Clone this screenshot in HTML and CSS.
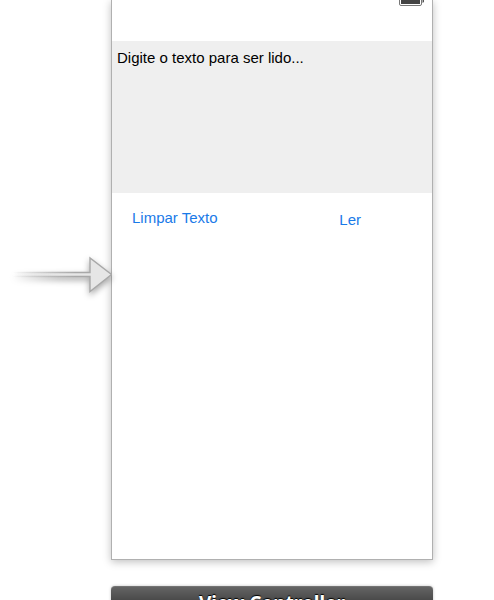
FILE: index.html
```
<!DOCTYPE html>
<html lang="pt-BR">
<head>
    <meta charset="UTF-8">
    <meta name="viewport" content="width=device-width, initial-scale=1.0">
    <title>View Controller</title>
    <link rel="stylesheet" href="styles.css">
</head>
<body>
    <main class="storyboard">
        <div class="entry">
            <svg class="arrow" width="112" height="48" viewBox="0 0 112 48" aria-hidden="true">
                <defs>
                    <linearGradient id="fade" gradientUnits="userSpaceOnUse" x1="12" y1="0" x2="75" y2="0">
                        <stop offset="0" stop-color="#a8a8a8" stop-opacity="0"/>
                        <stop offset="1" stop-color="#a8a8a8"/>
                    </linearGradient>
                    <linearGradient id="fill" gradientUnits="userSpaceOnUse" x1="12" y1="0" x2="60" y2="0">
                        <stop offset="0" stop-color="#e6e6e6" stop-opacity="0"/>
                        <stop offset="1" stop-color="#e6e6e6"/>
                    </linearGradient>
                </defs>
                <path d="M12 18.5H90V4L111.5 20.5L90 37.5V22.5H12Z" fill="url(#fill)" stroke="url(#fade)" stroke-width="1.4"/>
            </svg>
        </div>
        <section class="scene">
            <div class="screen">
                <div class="status-bar">
                    <svg width="26" height="6" viewBox="0 0 26 6" aria-hidden="true">
                        <path d="M.5 0V4Q.5 5.5 2 5.5H21Q22.5 5.5 22.5 4V0" fill="#fff" stroke="#777"/>
                        <path d="M2 0H21V4H2Z" fill="#444"/>
                        <path d="M23.5 0H25V2L23.5 3Z" fill="#555"/>
                    </svg>
                </div>
                <textarea class="text-view" aria-label="Texto">Digite o texto para ser lido...</textarea>
                <div class="actions">
                    <button type="button" class="clear">Limpar Texto</button>
                    <button type="button" class="read">Ler</button>
                </div>
            </div>
            <h1 class="dock">View Controller</h1>
        </section>
    </main>
</body>
</html>
```
FILE: styles.css
```
body {
    margin: 0;
    background-color: #fff;
    font-family: "Liberation Sans", Arial, sans-serif;
    color: #000;
}

.storyboard {
    display: grid;
    grid-template-columns: 111px 1fr 61px;
    height: 100vh;
    overflow: hidden;
}

.entry {
    padding-top: 254px;
    z-index: 1;
}

.arrow {
    display: block;
    filter: drop-shadow(0 3px 3px rgba(0, 0, 0, 0.35));
}

.screen {
    box-sizing: border-box;
    min-height: 560px;
    border: 1px solid #b0b0b0;
    border-top: none;
    background-color: #fff;
    box-shadow: 0 2px 8px rgba(0, 0, 0, 0.25);
}

.status-bar {
    display: flex;
    justify-content: flex-end;
    height: 41px;
    padding-right: 7px;
}

.text-view {
    display: block;
    box-sizing: border-box;
    width: 100%;
    height: 152px;
    padding: 8px 5px;
    border: none;
    background-color: #efefef;
    color: #000;
    font-family: inherit;
    font-size: 15px;
    line-height: 18px;
    resize: none;
}

.actions {
    display: flex;
    align-items: flex-start;
    justify-content: space-between;
    padding: 16px 71px 0 20px;
}

.actions button {
    padding: 0;
    border: none;
    background: none;
    color: #1a7ae8;
    font-family: inherit;
    font-size: 15px;
    line-height: 18px;
    cursor: pointer;
}

.actions .read {
    padding-top: 2px;
}

.dock {
    box-sizing: border-box;
    height: 40px;
    margin: 26px 0 0;
    padding-top: 4px;
    border-top: 1px solid #737373;
    border-radius: 4px;
    background: linear-gradient(#646464, #444 16px);
    box-shadow: 0 0 3px rgba(0, 0, 0, 0.25);
    color: #fff;
    font-family: "Noto Sans", sans-serif;
    font-size: 19px;
    line-height: 24px;
    text-align: center;
    text-shadow: 0 -1px 1px #000;
}
```
